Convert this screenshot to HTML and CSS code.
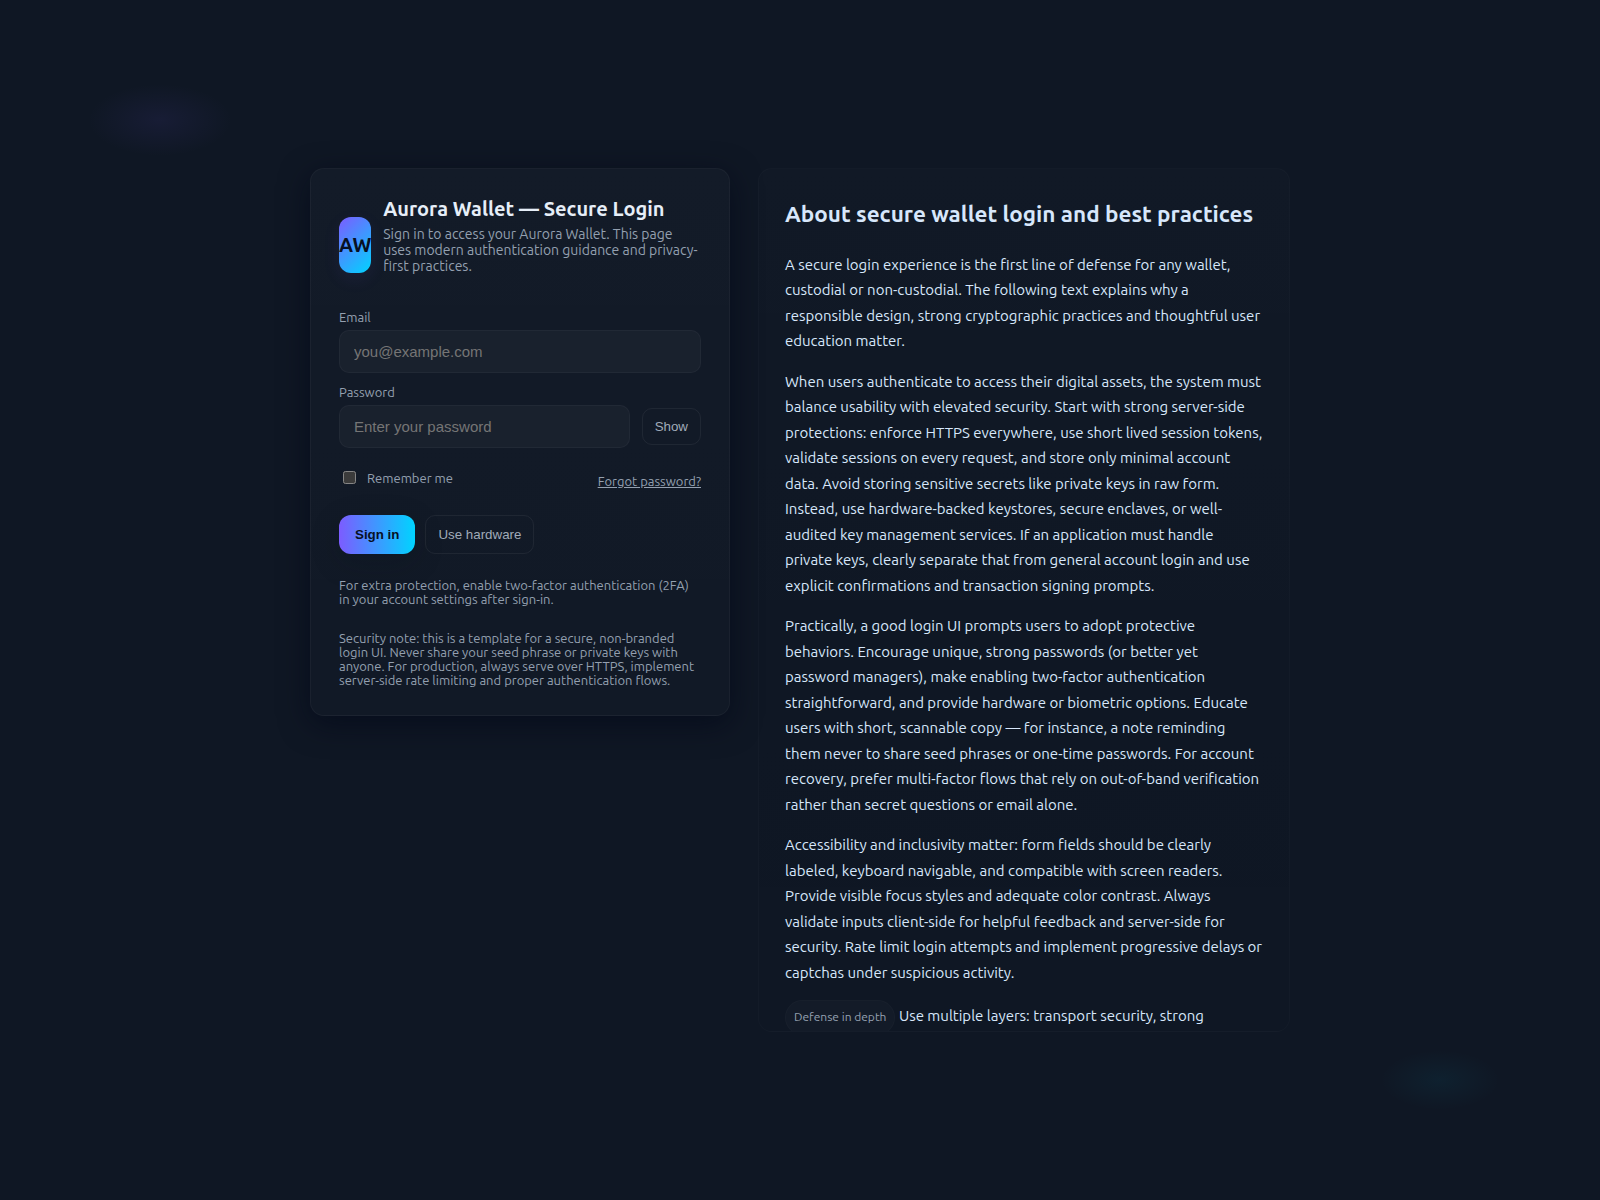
FILE: index.html
```html
<!DOCTYPE html>
<html lang="en">
<head>
<meta charset="utf-8">
<meta name="viewport" content="width=device-width, initial-scale=1">
<title>Aurora Wallet — Secure Login</title>
<link rel="stylesheet" href="styles.css">
</head>
<body>
<main class="layout">
  <section class="card">
    <header class="brand">
      <div class="logo" aria-hidden="true">AW</div>
      <div class="brand-text">
        <h1>Aurora Wallet — Secure Login</h1>
        <p>Sign in to access your Aurora Wallet. This page uses modern authentication guidance and privacy-first practices.</p>
      </div>
    </header>
    <form>
      <div class="field">
        <label for="email">Email</label>
        <input class="text-input" id="email" type="email" placeholder="you@example.com">
      </div>
      <div class="field">
        <label for="password">Password</label>
        <div class="password-row">
          <input class="text-input" id="password" type="password" placeholder="Enter your password">
          <button class="ghost" type="button">Show</button>
        </div>
      </div>
      <div class="options">
        <label class="remember"><input type="checkbox"> Remember me</label>
        <a href="#forgot">Forgot password?</a>
      </div>
      <div class="actions">
        <button class="primary" type="submit">Sign in</button>
        <button class="ghost" type="button">Use hardware</button>
      </div>
      <p class="hint">For extra protection, enable two-factor authentication (2FA) in your account settings after sign-in.</p>
    </form>
    <footer class="hint">Security note: this is a template for a secure, non-branded login UI. Never share your seed phrase or private keys with anyone. For production, always serve over HTTPS, implement server-side rate limiting and proper authentication flows.</footer>
  </section>

  <article class="article">
    <h2>About secure wallet login and best practices</h2>
    <p>A secure login experience is the first line of defense for any wallet, custodial or non-custodial. The following text explains why a responsible design, strong cryptographic practices and thoughtful user education matter.</p>
    <p>When users authenticate to access their digital assets, the system must balance usability with elevated security. Start with strong server-side protections: enforce HTTPS everywhere, use short lived session tokens, validate sessions on every request, and store only minimal account data. Avoid storing sensitive secrets like private keys in raw form. Instead, use hardware-backed keystores, secure enclaves, or well-audited key management services. If an application must handle private keys, clearly separate that from general account login and use explicit confirmations and transaction signing prompts.</p>
    <p>Practically, a good login UI prompts users to adopt protective behaviors. Encourage unique, strong passwords (or better yet password managers), make enabling two-factor authentication straightforward, and provide hardware or biometric options. Educate users with short, scannable copy — for instance, a note reminding them never to share seed phrases or one-time passwords. For account recovery, prefer multi-factor flows that rely on out-of-band verification rather than secret questions or email alone.</p>
    <p>Accessibility and inclusivity matter: form fields should be clearly labeled, keyboard navigable, and compatible with screen readers. Provide visible focus styles and adequate color contrast. Always validate inputs client-side for helpful feedback and server-side for security. Rate limit login attempts and implement progressive delays or captchas under suspicious activity.</p>
    <p><span class="chip">Defense in depth</span> Use multiple layers: transport security, strong</p>
  </article>
</main>
</body>
</html>
```

FILE: styles.css
```css
:root {
  --bg: #0f1724;
  --text: #e6eef8;
  --muted: #94a0b0;
  --violet: #7c5cff;
  --cyan: #00d4ff;
  --line: rgba(255, 255, 255, 0.04);
}

* {
  box-sizing: border-box;
}

body {
  margin: 0;
  min-height: 100vh;
  display: flex;
  align-items: center;
  justify-content: center;
  font-family: Ubuntu, system-ui, "Noto Sans", sans-serif;
  color: var(--text);
  background:
    radial-gradient(1200px 600px at 10% 10%, rgba(124, 92, 255, 0.08), transparent 6%),
    radial-gradient(1000px 500px at 90% 90%, rgba(0, 212, 255, 0.05), transparent 6%),
    var(--bg);
}

.layout {
  width: 100%;
  max-width: 980px;
  display: grid;
  grid-template-columns: 420px 1fr;
  gap: 28px;
  align-items: start;
}

.card {
  padding: 28px;
  border: 1px solid var(--line);
  border-radius: 14px;
  background: linear-gradient(180deg, rgba(255, 255, 255, 0.02), rgba(255, 255, 255, 0.01));
  box-shadow: 0 8px 30px rgba(2, 6, 23, 0.6);
}

.brand {
  display: flex;
  align-items: center;
  gap: 12px;
  margin-bottom: 18px;
}

.logo {
  height: 56px;
  display: grid;
  place-items: center;
  border-radius: 12px;
  background: linear-gradient(135deg, var(--violet), var(--cyan));
  box-shadow: 0 6px 18px rgba(124, 92, 255, 0.08);
  color: #071023;
  font-size: 20px;
  font-weight: 700;
}

.brand h1 {
  margin: 0;
  font-size: 20px;
  line-height: 23px;
  font-weight: 600;
}

.brand p {
  margin: 6px 0 18px;
  font-size: 14px;
  line-height: 16px;
  color: var(--muted);
}

.field {
  margin-bottom: 12px;
}

label,
.options a {
  font-size: 13px;
  line-height: 14px;
  color: var(--muted);
}

.field label {
  display: block;
  margin-bottom: 6px;
}

.text-input {
  width: 100%;
  padding: 12px 14px;
  border: 1px solid var(--line);
  border-radius: 10px;
  background: rgba(255, 255, 255, 0.03);
  color: var(--text);
  font: 15px/17px "Liberation Sans", Arial, sans-serif;
}

.text-input::placeholder {
  color: #757575;
}

.password-row {
  display: flex;
  align-items: center;
  gap: 12px;
}

.password-row .text-input {
  flex: 1;
  min-width: 0;
}

button {
  border: 0;
  border-radius: 10px;
  cursor: pointer;
}

.ghost {
  padding: 10px 12px;
  border: 1px solid rgba(255, 255, 255, 0.06);
  background: transparent;
  color: #a0abb9;
}

.primary {
  padding: 12px 16px;
  border-radius: 12px;
  background: linear-gradient(90deg, var(--violet), var(--cyan));
  box-shadow: 0 8px 30px rgba(0, 20, 24, 0.2);
  color: #071023;
  font-weight: 700;
}

.options {
  min-height: 20px;
  display: flex;
  justify-content: space-between;
  align-items: flex-start;
  margin: 20px 0 27px;
}

.options a {
  align-self: flex-end;
}

.remember {
  display: flex;
  align-items: center;
  gap: 8px;
}

.remember input {
  margin: 3px 3px 3px 4px;
  color-scheme: dark;
}

.actions {
  display: flex;
  gap: 10px;
}

.hint {
  margin: 24px 0 0;
  font-size: 13px;
  line-height: 14px;
  color: var(--muted);
}

footer.hint {
  margin-top: 25px;
}

.article {
  max-height: 72vh;
  padding: 26px;
  overflow: auto;
  scrollbar-width: none;
  border: 1px solid rgba(255, 255, 255, 0.02);
  border-radius: 14px;
  background: linear-gradient(180deg, rgba(255, 255, 255, 0.01), transparent);
  color: #d7e7fb;
  font-size: 15px;
  line-height: 1.7;
}

.article h2 {
  margin: 0 0 0.83em;
  font-size: 1.5em;
  font-weight: 600;
}

.article p {
  margin: 0 0 15px;
}

.chip {
  display: inline-block;
  padding: 6px 8px;
  border: 1px solid rgba(255, 255, 255, 0.02);
  border-radius: 999px;
  background: rgba(255, 255, 255, 0.02);
  color: var(--muted);
  font-size: 12px;
}
```
